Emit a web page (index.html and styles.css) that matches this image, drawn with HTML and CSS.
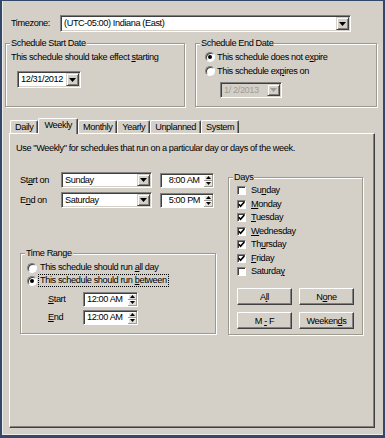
FILE: index.html
```html
<!DOCTYPE html>
<html lang="en">
<head>
    <meta charset="UTF-8">
    <meta name="viewport" content="width=device-width, initial-scale=1.0">
    <title>Schedule</title>
    <link rel="stylesheet" href="styles.css">
</head>
<body>

    <div class="window">
        <div class="tz-row">
            <span class="tz-label">Timezone:</span>
            <div class="combo tz-combo">
                <span class="combo-text">(UTC-05:00) Indiana (East)</span>
                <span class="drop-btn"><svg width="7" height="4" viewBox="0 0 7 4"><polygon points="0,0 7,0 3.5,4" fill="#000"/></svg></span>
            </div>
        </div>

        <div class="date-row">
            <div class="group start-group">
                <span class="group-title">Schedule Start Date</span>
                <div class="hint">This schedule should take effect <u>s</u>tarting</div>
                <div class="combo date-combo">
                    <span class="combo-text">12/31/2012</span>
                    <span class="drop-btn"><svg width="7" height="4" viewBox="0 0 7 4"><polygon points="0,0 7,0 3.5,4" fill="#000"/></svg></span>
                </div>
            </div>
            <div class="group end-group">
                <span class="group-title">Schedule End Date</span>
                <div class="opt"><span class="radio checked"></span><span>This schedule does not e<u>x</u>pire</span></div>
                <div class="opt"><span class="radio"></span><span>This schedule ex<u>p</u>ires on</span></div>
                <div class="combo date-combo end-combo disabled">
                    <span class="combo-text">1/ 2/2013</span>
                    <span class="drop-btn"><svg width="7" height="4" viewBox="0 0 7 4"><polygon points="0,0 7,0 3.5,4" fill="#a09d96"/></svg></span>
                </div>
            </div>
        </div>

        <div class="tabs">
            <div class="tab-strip">
                <span class="tab">Daily</span>
                <span class="tab active">Weekly</span>
                <span class="tab">Monthly</span>
                <span class="tab">Yearly</span>
                <span class="tab">Unplanned</span>
                <span class="tab">System</span>
            </div>
            <div class="tab-panel">
                <div class="desc">Use "Weekly" for schedules that run on a particular day or days of the week.</div>

                <div class="weekly-body">
                    <div class="left-col">
                        <div class="time-row">
                            <span class="row-label">St<u>a</u>rt on</span>
                            <div class="combo day-combo">
                                <span class="combo-text">Sunday</span>
                                <span class="drop-btn"><svg width="7" height="4" viewBox="0 0 7 4"><polygon points="0,0 7,0 3.5,4" fill="#000"/></svg></span>
                            </div>
                            <div class="spin-field">
                                <span class="spin-text">&#8199;8:00 AM</span>
                                <span class="spin">
                                    <span class="spin-btn"><svg width="5" height="3" viewBox="0 0 5 3"><polygon points="0,3 5,3 2.5,0" fill="#000"/></svg></span>
                                    <span class="spin-btn"><svg width="5" height="3" viewBox="0 0 5 3"><polygon points="0,0 5,0 2.5,3" fill="#000"/></svg></span>
                                </span>
                            </div>
                        </div>
                        <div class="time-row">
                            <span class="row-label">E<u>n</u>d on</span>
                            <div class="combo day-combo">
                                <span class="combo-text">Saturday</span>
                                <span class="drop-btn"><svg width="7" height="4" viewBox="0 0 7 4"><polygon points="0,0 7,0 3.5,4" fill="#000"/></svg></span>
                            </div>
                            <div class="spin-field">
                                <span class="spin-text">&#8199;5:00 PM</span>
                                <span class="spin">
                                    <span class="spin-btn"><svg width="5" height="3" viewBox="0 0 5 3"><polygon points="0,3 5,3 2.5,0" fill="#000"/></svg></span>
                                    <span class="spin-btn"><svg width="5" height="3" viewBox="0 0 5 3"><polygon points="0,0 5,0 2.5,3" fill="#000"/></svg></span>
                                </span>
                            </div>
                        </div>

                        <div class="group range-group">
                            <span class="group-title">Time Range</span>
                            <div class="opt range-opt"><span class="radio"></span><span>This schedule should run <u>a</u>ll day</span></div>
                            <div class="opt range-opt"><span class="radio checked"></span><span class="focused">This schedule should run <u>b</u>etween</span></div>
                            <div class="range-row">
                                <span class="range-label"><u>S</u>tart</span>
                                <div class="spin-field range-field">
                                    <span class="spin-text">12:00 AM</span>
                                    <span class="spin">
                                        <span class="spin-btn"><svg width="5" height="3" viewBox="0 0 5 3"><polygon points="0,3 5,3 2.5,0" fill="#000"/></svg></span>
                                        <span class="spin-btn"><svg width="5" height="3" viewBox="0 0 5 3"><polygon points="0,0 5,0 2.5,3" fill="#000"/></svg></span>
                                    </span>
                                </div>
                            </div>
                            <div class="range-row">
                                <span class="range-label"><u>E</u>nd</span>
                                <div class="spin-field range-field">
                                    <span class="spin-text">12:00 AM</span>
                                    <span class="spin">
                                        <span class="spin-btn"><svg width="5" height="3" viewBox="0 0 5 3"><polygon points="0,3 5,3 2.5,0" fill="#000"/></svg></span>
                                        <span class="spin-btn"><svg width="5" height="3" viewBox="0 0 5 3"><polygon points="0,0 5,0 2.5,3" fill="#000"/></svg></span>
                                    </span>
                                </div>
                            </div>
                        </div>
                    </div>

                    <div class="group days-group">
                        <span class="group-title">Days</span>
                        <div class="day"><span class="check"></span><span>Su<u>n</u>day</span></div>
                        <div class="day"><span class="check checked"><svg width="7" height="7" viewBox="0 0 7 7"><polyline points="0.8,3.2 2.6,5.2 6.3,1" fill="none" stroke="#000" stroke-width="1.7"/></svg></span><span><u>M</u>onday</span></div>
                        <div class="day"><span class="check checked"><svg width="7" height="7" viewBox="0 0 7 7"><polyline points="0.8,3.2 2.6,5.2 6.3,1" fill="none" stroke="#000" stroke-width="1.7"/></svg></span><span><u>T</u>uesday</span></div>
                        <div class="day"><span class="check checked"><svg width="7" height="7" viewBox="0 0 7 7"><polyline points="0.8,3.2 2.6,5.2 6.3,1" fill="none" stroke="#000" stroke-width="1.7"/></svg></span><span><u>W</u>ednesday</span></div>
                        <div class="day"><span class="check checked"><svg width="7" height="7" viewBox="0 0 7 7"><polyline points="0.8,3.2 2.6,5.2 6.3,1" fill="none" stroke="#000" stroke-width="1.7"/></svg></span><span>Th<u>u</u>rsday</span></div>
                        <div class="day"><span class="check checked"><svg width="7" height="7" viewBox="0 0 7 7"><polyline points="0.8,3.2 2.6,5.2 6.3,1" fill="none" stroke="#000" stroke-width="1.7"/></svg></span><span><u>F</u>riday</span></div>
                        <div class="day"><span class="check"></span><span>Saturda<u>y</u></span></div>

                        <div class="day-buttons">
                            <button class="btn">A<u>l</u>l</button>
                            <button class="btn">N<u>o</u>ne</button>
                            <button class="btn">M <u>-</u> F</button>
                            <button class="btn">Weeken<u>d</u>s</button>
                        </div>
                    </div>
                </div>
            </div>
        </div>
    </div>

</body>
</html>
```

FILE: styles.css
```css
* {
    margin: 0;
    padding: 0;
    box-sizing: border-box;
}

body {
    font-family: "Liberation Sans", Arial, sans-serif;
    font-size: 9.2px;
    letter-spacing: -0.4px;
    line-height: 11px;
    color: #000;
    background-color: #d4d0c8;
}

u {
    text-decoration-thickness: 1px;
    text-underline-offset: 1px;
}

.window {
    width: 385px;
    height: 438px;
    background-color: #d4d0c8;
    border: 2px solid #34496a;
    border-top-width: 1px;
    border-bottom-width: 3px;
    box-shadow: inset 1px 0 0 #eeece8, inset 0 -1px 0 #eeece8;
}

/* sunken white field with a drop button */
.combo {
    display: flex;
    height: 17px;
    background-color: #fff;
    border: 1px solid;
    border-color: #808080 #fff #fff #808080;
    box-shadow: inset 1px 1px 0 #404040, inset -1px -1px 0 #d4d0c8;
}

.combo-text {
    flex: 1;
    padding: 0 3px;
    line-height: 15px;
    white-space: nowrap;
    overflow: hidden;
}

.drop-btn {
    width: 13px;
    margin: 1px;
    display: flex;
    align-items: center;
    justify-content: center;
    background-color: #d4d0c8;
    border: 1px solid;
    border-color: #d4d0c8 #404040 #404040 #d4d0c8;
    box-shadow: inset 1px 1px 0 #fff, inset -1px -1px 0 #808080;
}

.tz-row {
    display: flex;
    align-items: center;
    margin: 14px 0 0 9px;
}

.tz-label {
    width: 49px;
}

.tz-combo {
    width: 291px;
}

/* etched group boxes */
.group {
    position: relative;
    border: 1px solid #9c998f;
    box-shadow: inset 1px 1px 0 #fff, 1px 1px 0 #fff;
}

.group-title {
    position: absolute;
    top: -6px;
    left: 4px;
    padding: 0 1px;
    background-color: #d4d0c8;
    white-space: nowrap;
}

.date-row {
    display: flex;
    gap: 10px;
    margin: 11px 0 0 3px;
}

.start-group {
    width: 180px;
    height: 64px;
    padding: 8px 0 0 5px;
}

.date-combo {
    width: 64px;
    margin: 8px 0 0 6px;
}

.end-group {
    width: 182px;
    height: 64px;
    padding: 6px 0 0 9px;
}

.end-combo {
    width: 62px;
    height: 16px;
    margin: 4px 0 0 15px;
}

.combo.disabled {
    background-color: #d4d0c8;
    color: #a09d96;
}

.combo.disabled .combo-text {
    line-height: 14px;
}

.opt {
    display: flex;
    align-items: center;
    height: 14px;
    white-space: nowrap;
}

.radio {
    position: relative;
    width: 10px;
    height: 10px;
    margin-right: 2px;
    border-radius: 50%;
    background-color: #fff;
    border: 1px solid;
    border-color: #808080 #fff #fff #808080;
    box-shadow: inset 1px 1px 0 #404040;
}

.radio.checked::after {
    content: "";
    position: absolute;
    left: 2px;
    top: 2px;
    width: 4px;
    height: 4px;
    border-radius: 50%;
    background-color: #000;
}

/* tabs */
.tabs {
    width: 366px;
    margin: 11px 0 0 7px;
}

.tab-strip {
    display: flex;
    align-items: flex-end;
    height: 15px;
    padding-left: 1px;
}

.tab {
    height: 13px;
    padding: 0 4px;
    line-height: 12px;
    border: 1px solid;
    border-color: #fff #404040 transparent #fff;
    border-bottom: none;
    border-radius: 2px 2px 0 0;
    box-shadow: inset -1px 0 0 #808080;
    white-space: nowrap;
}

.tab.active {
    position: relative;
    z-index: 1;
    height: 16px;
    margin-bottom: -1px;
    padding: 0 5px;
    line-height: 13px;
    background-color: #d4d0c8;
}

.tab-panel {
    height: 295px;
    padding: 9px 0 0 6px;
    border: 1px solid;
    border-color: #fff #404040 #404040 #fff;
    box-shadow: inset -1px -1px 0 #808080;
}

.desc {
    white-space: nowrap;
}

.weekly-body {
    display: flex;
    margin: 18px 0 0 4px;
}

.left-col {
    width: 208px;
}

.time-row {
    display: flex;
    align-items: center;
    height: 16px;
}

.time-row + .time-row {
    margin-top: 4px;
}

.row-label {
    width: 41px;
}

.day-combo {
    width: 91px;
    height: 16px;
}

.day-combo .combo-text {
    line-height: 14px;
}

/* time field with spinner */
.spin-field {
    display: flex;
    width: 54px;
    height: 15px;
    margin-left: 8px;
    background-color: #fff;
    border: 1px solid;
    border-color: #808080 #fff #fff #808080;
    box-shadow: inset 1px 1px 0 #404040;
}

.spin-text {
    flex: 1;
    padding-left: 3px;
    line-height: 13px;
    white-space: nowrap;
}

.spin {
    display: flex;
    flex-direction: column;
    width: 9px;
    margin: 1px 0 0;
}

.spin-btn {
    flex: 1;
    display: flex;
    align-items: center;
    justify-content: center;
    background-color: #e4e1db;
    border-right: 1px solid #a09d96;
    border-bottom: 1px solid #a09d96;
    box-shadow: inset 1px 1px 0 #fff;
}

.range-group {
    width: 196px;
    height: 81px;
    margin-top: 45px;
    padding: 7px 0 0 6px;
}

.range-group .opt {
    height: 13px;
}

.range-opt .radio {
    margin-right: 3px;
}

.focused {
    outline: 1px dotted #000;
    outline-offset: 0;
    padding: 0 1px;
    margin-left: -1px;
}

.range-row {
    display: flex;
    align-items: center;
    margin: 5px 0 0 21px;
}

.range-row + .range-row {
    margin-top: 3px;
}

.range-label {
    width: 35px;
}

.range-field {
    width: 55px;
    margin-left: 0;
}

/* days */
.days-group {
    width: 135px;
    height: 158px;
    margin-top: 5px;
    padding: 6px 0 0 8px;
}

.day {
    display: flex;
    align-items: center;
    height: 13.5px;
}

.check {
    display: flex;
    align-items: center;
    justify-content: center;
    width: 9px;
    height: 9px;
    margin-right: 5px;
    background-color: #fff;
    border: 1px solid;
    border-color: #808080 #fff #fff #808080;
    box-shadow: inset 1px 1px 0 #404040;
}

.day-buttons {
    display: grid;
    grid-template-columns: 55px 55px;
    grid-auto-rows: 17px;
    gap: 7px;
    margin-top: 9.5px;
}

.btn {
    font-family: inherit;
    font-size: inherit;
    letter-spacing: inherit;
    color: #000;
    background-color: #d4d0c8;
    border: 1px solid;
    border-color: #fff #404040 #404040 #fff;
    box-shadow: inset -1px -1px 0 #808080;
}
```
